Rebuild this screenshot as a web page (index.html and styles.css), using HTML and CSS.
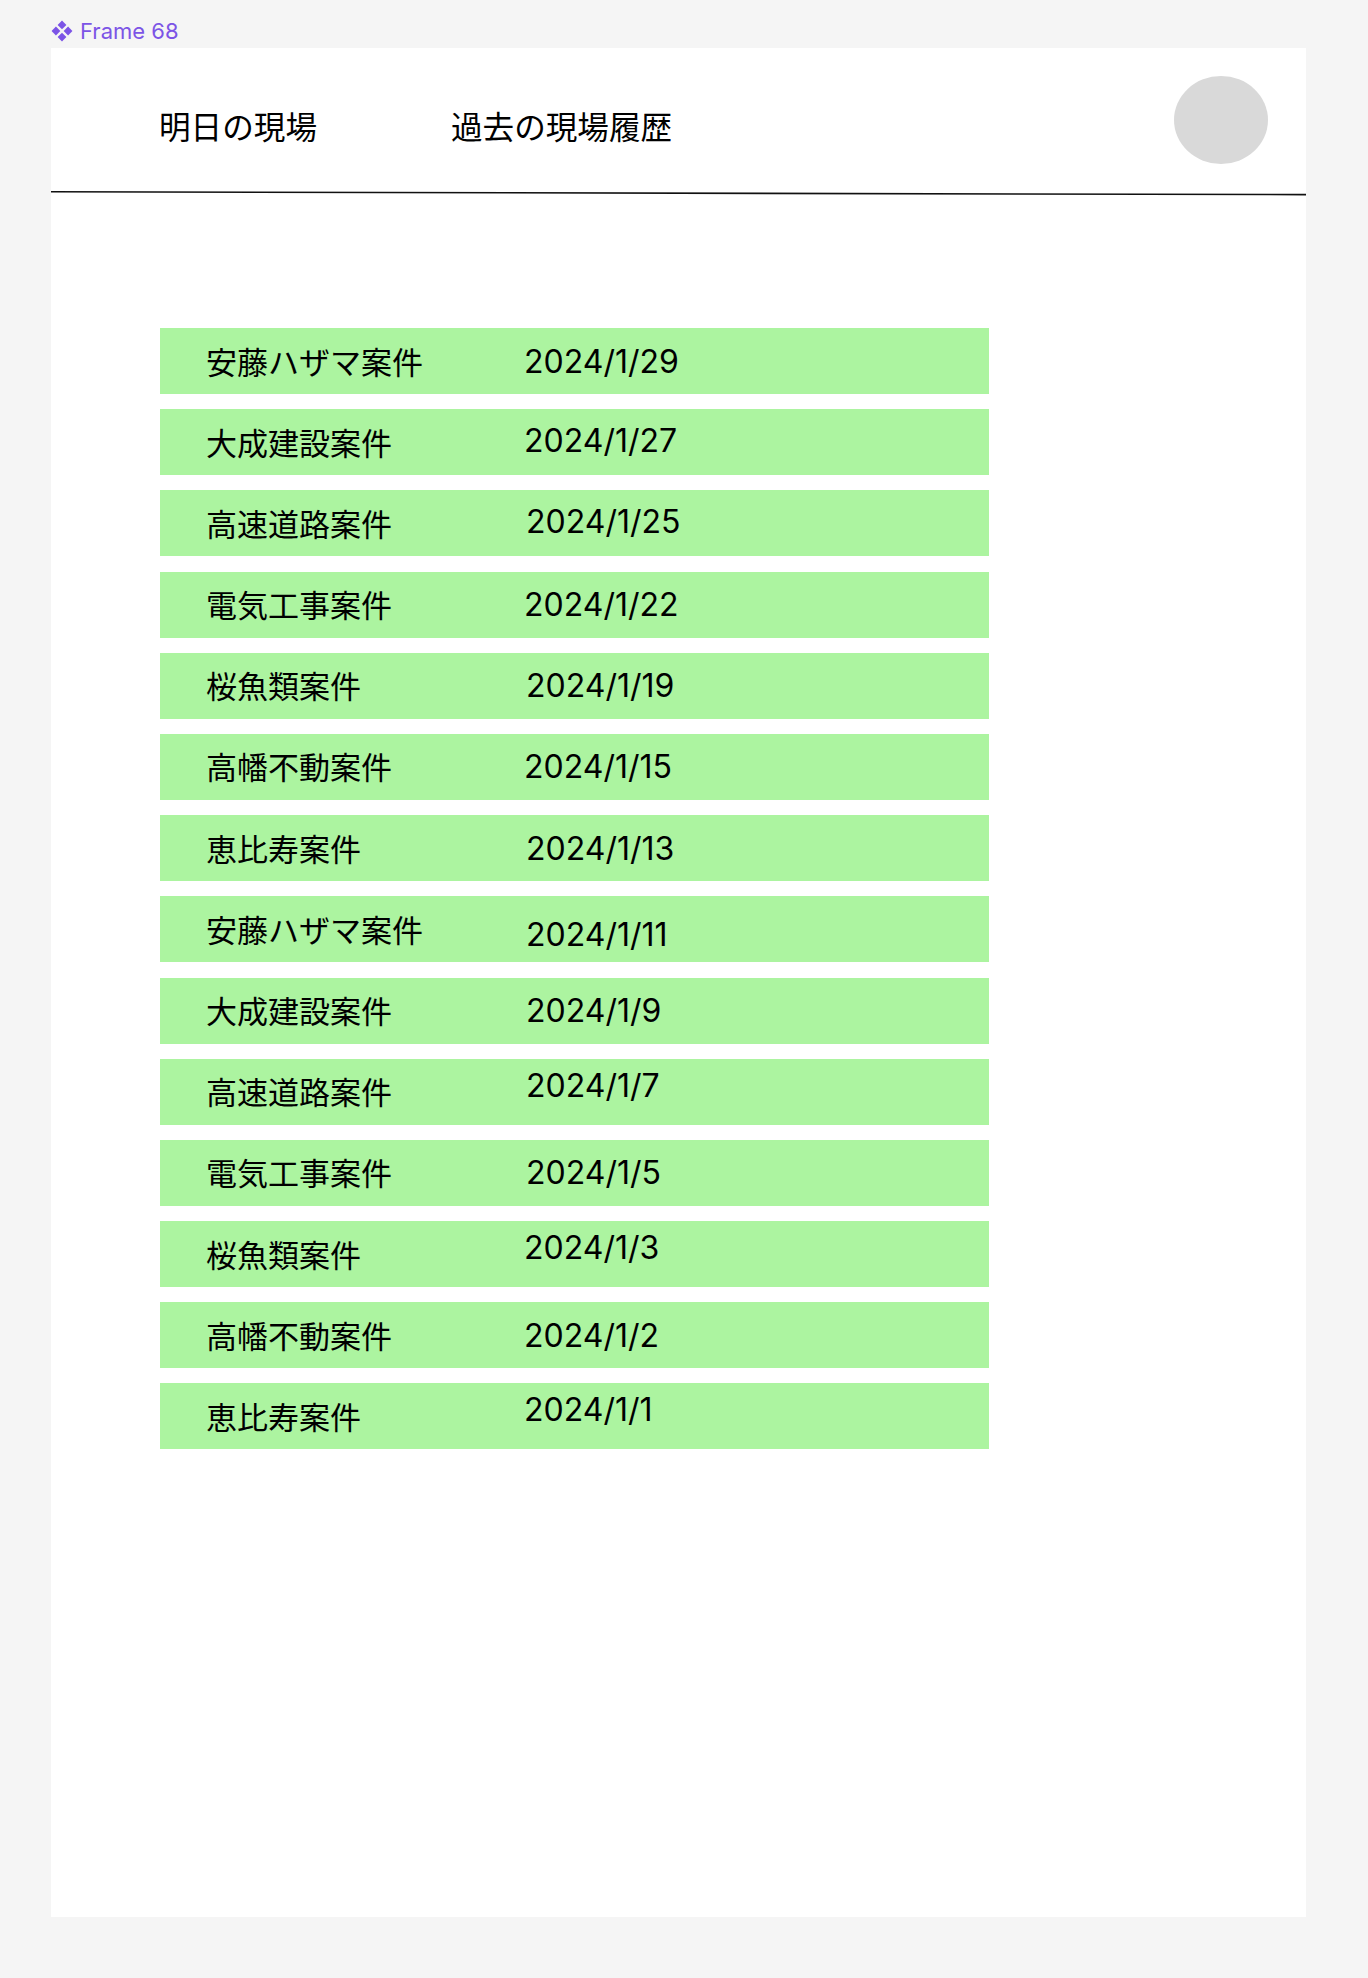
FILE: index.html
```html
<!DOCTYPE html>
<html lang="ja">
    <head>
        <meta charset="UTF-8" />
        <meta name="viewport" content="width=device-width, initial-scale=1.0" />
        <title>Frame 68</title>
        <link rel="stylesheet" href="styles.css">
    </head>
    <body>
        <div class="frameLabel">
            <svg class="componentIcon" viewBox="0 0 20 20" width="22" height="22">
                <path d="M10 0.5 L14 4.5 L10 8.5 L6 4.5 Z" />
                <path d="M4.5 6 L8.5 10 L4.5 14 L0.5 10 Z" />
                <path d="M15.5 6 L19.5 10 L15.5 14 L11.5 10 Z" />
                <path d="M10 11.5 L14 15.5 L10 19.5 L6 15.5 Z" />
            </svg>
            <span>Frame 68</span>
        </div>
        <div class="frame">
            <div class="header">
                <div class="nav">
                    <div class="navItem">明日の現場</div>
                    <div class="navItem">過去の現場履歴</div>
                </div>
                <div class="avatar"></div>
            </div>
            <svg class="headerLine" viewBox="0 0 1255 6" width="1255" height="6">
                <line x1="0" y1="1.8" x2="1255" y2="4.6" />
            </svg>
            <div class="list">
                <div class="row"><span class="name">安藤ハザマ案件</span><span class="date">2024/1/29</span></div>
                <div class="row"><span class="name">大成建設案件</span><span class="date upS">2024/1/27</span></div>
                <div class="row"><span class="name">高速道路案件</span><span class="date upS nudge">2024/1/25</span></div>
                <div class="row"><span class="name">電気工事案件</span><span class="date">2024/1/22</span></div>
                <div class="row"><span class="name">桜魚類案件</span><span class="date nudge">2024/1/19</span></div>
                <div class="row"><span class="name">高幡不動案件</span><span class="date">2024/1/15</span></div>
                <div class="row"><span class="name">恵比寿案件</span><span class="date nudge">2024/1/13</span></div>
                <div class="row"><span class="name">安藤ハザマ案件</span><span class="date down nudge">2024/1/11</span></div>
                <div class="row"><span class="name">大成建設案件</span><span class="date nudge">2024/1/9</span></div>
                <div class="row"><span class="name">高速道路案件</span><span class="date up nudge">2024/1/7</span></div>
                <div class="row"><span class="name">電気工事案件</span><span class="date nudge">2024/1/5</span></div>
                <div class="row"><span class="name">桜魚類案件</span><span class="date up">2024/1/3</span></div>
                <div class="row"><span class="name">高幡不動案件</span><span class="date">2024/1/2</span></div>
                <div class="row"><span class="name">恵比寿案件</span><span class="date up">2024/1/1</span></div>
            </div>
        </div>
    </body>
</html>
```

FILE: styles.css
```css
body {
    margin: 0;
    background-color: rgb(245, 245, 245);
    font-family: "Noto Sans CJK JP", "Noto Sans", sans-serif;
    color: #000;
}
.frameLabel {
    height: 48px;
    box-sizing: border-box;
    padding: 20px 0 0 51px;
    display: flex;
    align-items: flex-start;
    gap: 7px;
    font-family: Inter, "Liberation Sans", sans-serif;
    font-size: 22px;
    line-height: 22px;
    color: rgb(124, 84, 230);
}
.componentIcon {
    display: block;
    fill: rgb(124, 84, 230);
}
.frame {
    margin-left: 51px;
    width: 1255px;
    height: 1869px;
    background-color: #fff;
}
.header {
    height: 142px;
    box-sizing: border-box;
    padding: 0 38px 0 108px;
    display: flex;
    align-items: center;
    justify-content: space-between;
}
.nav {
    display: flex;
    gap: 134px;
    margin-top: 13px;
}
.navItem {
    font-size: 31.6px;
    line-height: 1;
}
.avatar {
    width: 94px;
    height: 88px;
    border-radius: 50%;
    background-color: rgb(217, 217, 217);
    margin-top: 2px;
}
.headerLine {
    display: block;
}
.headerLine line {
    stroke: #111;
    stroke-width: 1.6;
}
.list {
    padding: 132px 0 0 109px;
    display: flex;
    flex-direction: column;
    gap: 15.2px;
}
.row {
    width: 829px;
    height: 66px;
    background-color: rgb(172, 244, 160);
    display: grid;
    grid-template-columns: 318px auto;
    align-items: center;
    padding-left: 46px;
    box-sizing: border-box;
}
.name {
    font-size: 31px;
    line-height: 1;
    margin-bottom: 2px;
}
.date {
    font-family: Inter, "Liberation Sans", sans-serif;
    font-size: 32px;
    line-height: 1;
    margin-top: 1px;
}
.date.upS {
    margin-top: 0;
    margin-bottom: 3px;
}
.date.up {
    margin-top: 0;
    margin-bottom: 12px;
}
.date.down {
    margin-top: 11px;
}
.date.nudge {
    margin-left: 2px;
}
```
